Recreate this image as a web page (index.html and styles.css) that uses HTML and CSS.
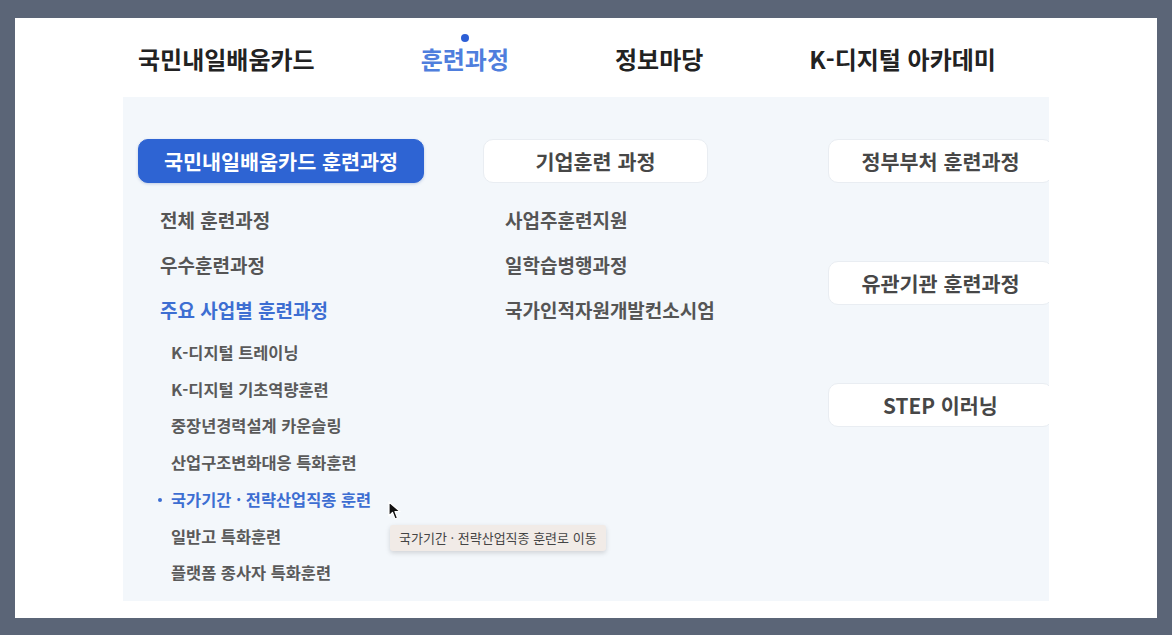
FILE: index.html
```html
<!DOCTYPE html>
<html lang="ko">
<head>
    <meta charset="UTF-8">
    <meta name="viewport" content="width=device-width, initial-scale=1.0">
    <title>훈련과정 메뉴</title>
    <link rel="stylesheet" href="styles.css">
</head>
<body>
    <div class="frame">
        <!-- Top navigation -->
        <nav class="gnb">
            <a class="gnb-item">국민내일배움카드</a>
            <a class="gnb-item active">훈련과정</a>
            <a class="gnb-item">정보마당</a>
            <a class="gnb-item">K-디지털 아카데미</a>
        </nav>

        <!-- Mega menu panel -->
        <div class="panel">
            <div class="col">
                <div class="menu-btn primary">국민내일배움카드 훈련과정</div>
                <ul class="menu-list">
                    <li>전체 훈련과정</li>
                    <li>우수훈련과정</li>
                    <li class="blue">주요 사업별 훈련과정</li>
                </ul>
                <ul class="sub-list">
                    <li>K-디지털 트레이닝</li>
                    <li>K-디지털 기초역량훈련</li>
                    <li>중장년경력설계 카운슬링</li>
                    <li>산업구조변화대응 특화훈련</li>
                    <li class="current">국가기간 · 전략산업직종 훈련</li>
                    <li>일반고 특화훈련</li>
                    <li>플랫폼 종사자 특화훈련</li>
                </ul>
            </div>
            <div class="col">
                <div class="menu-btn">기업훈련 과정</div>
                <ul class="menu-list">
                    <li>사업주훈련지원</li>
                    <li>일학습병행과정</li>
                    <li>국가인적자원개발컨소시엄</li>
                </ul>
            </div>
            <div class="col stack">
                <div class="menu-btn">정부부처 훈련과정</div>
                <div class="menu-btn">유관기관 훈련과정</div>
                <div class="menu-btn">STEP 이러닝</div>
            </div>

            <!-- mouse cursor + hover tooltip -->
            <svg class="cursor" width="14" height="20" viewBox="0 0 14 20">
                <path d="M1 1 L1 15 L4.5 11.5 L7 18 L9.5 17 L7 10.5 L12 10.5 Z" fill="#111" stroke="#fff" stroke-width="1.2" stroke-linejoin="round"/>
            </svg>
            <div class="tooltip">국가기간 · 전략산업직종 훈련로 이동</div>
        </div>
    </div>
</body>
</html>
```

FILE: styles.css
```css
body {
    margin: 0;
    padding: 18px 15px 17px;
    background-color: #5b6577;
    font-family: "Noto Sans CJK KR", "Noto Sans", sans-serif;
}
.frame {
    height: 600px;
    background-color: #fff;
}

/* Top navigation */
.gnb {
    display: flex;
    align-items: center;
    gap: 106px;
    height: 77px;
    padding: 2px 0 0 123px;
}
.gnb-item {
    position: relative;
    font-size: 24px;
    font-weight: bold;
    line-height: 30px;
    color: #222;
}
.gnb-item.active {
    color: #4f7edd;
}
.gnb-item.active::before {
    content: "";
    position: absolute;
    top: -10px;
    left: 50%;
    width: 8px;
    height: 8px;
    margin-left: -4px;
    border-radius: 50%;
    background-color: #2d5fd6;
}

/* Mega menu */
.panel {
    position: relative;
    display: grid;
    grid-template-columns: 345px 345px 1fr;
    width: 911px;
    height: 462px;
    margin-left: 108px;
    padding: 42px 0 0 15px;
    background-color: #f3f7fb;
    overflow: hidden;
}
.col.stack {
    display: flex;
    flex-direction: column;
    gap: 78px;
}
.menu-btn {
    box-sizing: border-box;
    width: 225px;
    height: 44px;
    line-height: 42px;
    text-align: center;
    font-size: 20.7px;
    font-weight: bold;
    color: #474747;
    background-color: #fff;
    border: 1px solid #e9edf2;
    border-radius: 10px;
    white-space: nowrap;
}
.menu-btn.primary {
    width: 286px;
    color: #fff;
    background-color: #2e64d3;
    border-color: #2e64d3;
    box-shadow: 0 1px 3px rgba(30, 70, 160, 0.25);
}
.menu-list,
.sub-list {
    list-style: none;
    margin: 0;
    padding: 0;
}
.menu-list {
    margin-top: 14px;
    padding-left: 22px;
}
.menu-list li {
    font-size: 19px;
    font-weight: bold;
    line-height: 45px;
    color: #555;
}
.menu-list li.blue {
    color: #3d6ed2;
}
.sub-list {
    margin-top: 2px;
    padding-left: 33px;
}
.sub-list li {
    position: relative;
    font-size: 16.4px;
    font-weight: bold;
    line-height: 36.7px;
    color: #5a5a5a;
}
.sub-list li.current {
    color: #3d6ed2;
}
.sub-list li.current::before {
    content: "";
    position: absolute;
    left: -13px;
    top: 17px;
    width: 4px;
    height: 4px;
    border-radius: 50%;
    background-color: #3d6ed2;
}

/* cursor and tooltip over the list */
.cursor {
    position: absolute;
    left: 265px;
    top: 404px;
}
.tooltip {
    position: absolute;
    left: 267px;
    top: 428px;
    padding: 0 9px;
    height: 26px;
    line-height: 26px;
    font-size: 13px;
    color: #444;
    background-color: #f1ebe7;
    border-radius: 3px;
    box-shadow: 0 2px 5px rgba(0, 0, 0, 0.15);
    white-space: nowrap;
}
```
